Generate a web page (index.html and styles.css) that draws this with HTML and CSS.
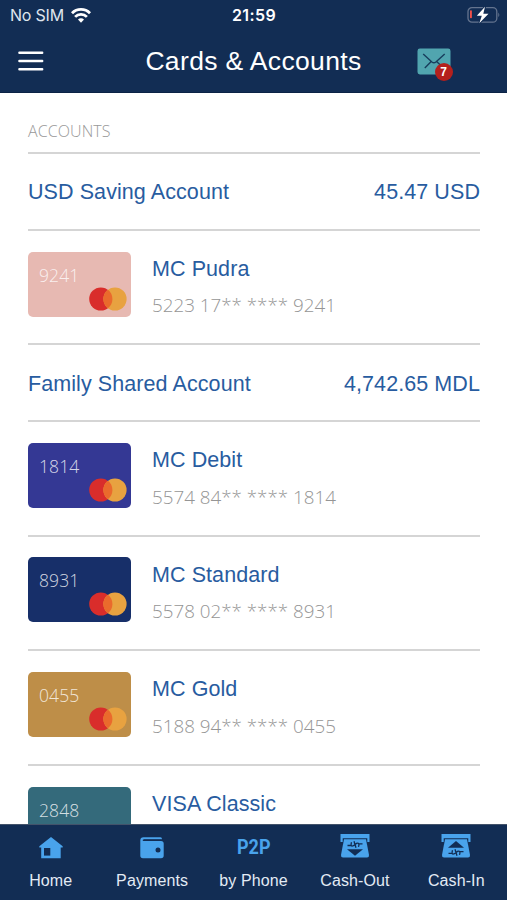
FILE: index.html
```
<!DOCTYPE html>
<html lang="en">
<head>
<meta charset="utf-8">
<meta name="viewport" content="width=device-width, initial-scale=1">
<title>Cards &amp; Accounts</title>
<link rel="stylesheet" href="styles.css">
</head>
<body>
<svg width="0" height="0" class="defs" aria-hidden="true">
  <symbol id="mc" viewBox="0 0 38 24">
    <circle cx="11.8" cy="12" r="11.6" fill="#d92d2b"/>
    <circle cx="26" cy="12" r="11.6" fill="#e8a240"/>
    <path d="M18.9 2.8a11.6 11.6 0 0 1 0 18.4a11.6 11.6 0 0 1 0-18.4z" fill="#ea6a2c"/>
  </symbol>
</svg>
<div class="app">
  <header class="top">
    <div class="status">
      <div class="carrier"><span>No SIM</span>
        <svg width="20" height="15" viewBox="0 0 20 15" fill="none" stroke="#fff" stroke-width="2.8"><path d="M1 5.2a12.6 12.6 0 0 1 18 0"/><path d="M4.1 8.9a8.2 8.2 0 0 1 11.8 0"/><path d="M10 14.8l-3-3.2a4.2 4.2 0 0 1 6 0z" fill="#fff" stroke="none"/></svg>
      </div>
      <div class="time">21:59</div>
      <svg class="battery" width="34" height="18" viewBox="0 0 34 18"><rect x="1" y="1.6" width="28.8" height="14.6" rx="4" fill="none" stroke="#64748f" stroke-width="1.3"/><path d="M31.3 6.5q2 2.4 0 4.8z" fill="#64748f"/><rect x="3" y="4.3" width="1.9" height="8" rx=".8" fill="#f0504a"/><path d="M18 .8L9.8 9.8h5L12.3 17.2L21.5 7.8h-5.2z" fill="#fff" stroke="#122d54" stroke-width="2" paint-order="stroke"/></svg>
    </div>
    <div class="titlebar">
      <svg class="menu" width="26" height="20" viewBox="0 0 26 20" stroke="#fff" stroke-width="2.4" stroke-linecap="round"><path d="M1.4 1.7h22.8M1.4 10h22.8M1.4 18.3h22.8"/></svg>
      <h1>Cards &amp; Accounts</h1>
      <div class="mail">
        <svg width="34" height="27" viewBox="0 0 34 27"><rect x=".5" y=".5" width="33" height="26" rx="2.4" fill="#51a5af"/><path d="M6.2 6l8.700 8q2 1.500 4 0l8.800-8M14.200 13.500L7.800 20M19.600 13.500l7 6.500" fill="none" stroke="#183d5c" stroke-width="1.4"/></svg>
        <span class="badge">7</span>
      </div>
    </div>
  </header>
  <main class="list">
    <h2>ACCOUNTS</h2>
    <div class="account"><span>USD Saving Account</span><span>45.47 USD</span></div>
    <div class="item"><div class="card pudra"><span>9241</span><svg class="logo"><use href="#mc"/></svg></div><div class="info"><div class="name">MC Pudra</div><div class="number">5223 17** **** 9241</div></div></div>
    <div class="account"><span>Family Shared Account</span><span>4,742.65 MDL</span></div>
    <div class="item"><div class="card debit"><span>1814</span><svg class="logo"><use href="#mc"/></svg></div><div class="info"><div class="name">MC Debit</div><div class="number">5574 84** **** 1814</div></div></div>
    <div class="item"><div class="card standard"><span>8931</span><svg class="logo"><use href="#mc"/></svg></div><div class="info"><div class="name">MC Standard</div><div class="number">5578 02** **** 8931</div></div></div>
    <div class="item"><div class="card gold"><span>0455</span><svg class="logo"><use href="#mc"/></svg></div><div class="info"><div class="name">MC Gold</div><div class="number">5188 94** **** 0455</div></div></div>
    <div class="item"><div class="card visa"><span>2848</span></div><div class="info"><div class="name">VISA Classic</div></div></div>
  </main>
  <nav class="tabs">
    <a class="tab"><svg width="24" height="22" viewBox="0 0 24 22"><path d="M12 0L.3 9.2v1.3h1.9V21.2h19.5V10.5h2V9.2z" fill="#49a3ec"/><path d="M5 11h6.3v7.6H5z" fill="#122d54"/></svg><span>Home</span></a>
    <a class="tab"><svg width="24" height="22" viewBox="0 0 24 22"><path d="M3.5.3H20.5q1.5 0 1.5 2H3.6v1.6H21q2.700 0 2.700 2.600v12.100Q23.700 21.200 21 21.200H3Q.3 21.200 .3 18.600V3.500Q.3.300 3.500.3z" fill="#49a3ec"/><path d="M2.800 3.300H21.500" stroke="#122d54" stroke-width="1.3"/><circle cx="18" cy="13" r="2.5" fill="#122d54"/></svg><span>Payments</span></a>
    <a class="tab"><b>P2P</b><span>by Phone</span></a>
    <a class="tab"><svg class="atm" width="30" height="26" viewBox="0 0 30 26"><path d="M.5 1h29v8h-2.200V5.300H2.700V9H.5z" fill="#49a3ec"/><path d="M4 6.300h22L29 22q.2 2.500-2 2.500H3Q.8 24.500 1 22z" fill="#49a3ec"/><path d="M7 16.200h16l-8 6.600z" fill="#122d54"/><path d="M7.500 12.500h4M18.500 10.800h4M11.500 9.200q-1.500 5 2 3.500l3-2.300q3.500-1 2 3.500M14 8.200l2 6.500" fill="none" stroke="#122d54" stroke-width="1.3"/></svg><span>Cash-Out</span></a>
    <a class="tab"><svg class="atm" width="30" height="26" viewBox="0 0 30 26"><path d="M.5 1h29v8h-2.200V5.300H2.700V9H.5z" fill="#49a3ec"/><path d="M4 6.300h22L29 22q.2 2.500-2 2.500H3Q.8 24.500 1 22z" fill="#49a3ec"/><path d="M7 14.700h16l-8-6.600z" fill="#122d54"/><path d="M7.500 20.300h4M18.500 18.700h4M11.500 17.200q-1.500 5 2 3.500l3-2.300q3.500-1 2 3.500M14 16.200l2 6.500" fill="none" stroke="#122d54" stroke-width="1.3"/></svg><span>Cash-In</span></a>
  </nav>
</div>
</body>
</html>
```
FILE: styles.css
```
* { box-sizing: border-box; }
body { margin: 0; font-family: "Liberation Sans", Arial, sans-serif; background: #fff; }
.defs { display: block; height: 0; }
.app { height: 900px; display: flex; flex-direction: column; overflow: hidden; }
.top { flex: none; height: 93px; background: #122d54; color: #fff; border-bottom: 1px solid #0b2345; }
.status { height: 30px; display: grid; grid-template-columns: 1fr auto 1fr; align-items: center; padding: 0 6px 0 10px; font-family: Inter, sans-serif; font-size: 16px; }
.carrier { display: flex; align-items: center; gap: 7px; color: #dfe5ee; letter-spacing: -0.2px; }
.time { font-weight: 600; letter-spacing: 0.4px; margin-right: 3px; }
.battery { justify-self: end; margin-top: -1px; }
.titlebar { height: 62px; display: grid; grid-template-columns: 1fr auto 1fr; align-items: center; padding: 0 18px; }
h1 { margin: 0; font-size: 26.5px; font-weight: 400; letter-spacing: 0.35px; line-height: 30px; }
.mail { position: relative; width: 34px; height: 27px; margin: 0 0 0 55px; }
.mail svg { display: block; }
.badge { position: absolute; left: 18px; top: 15px; width: 18px; height: 18px; border-radius: 50%; background: #b4201d; font: 700 12px/18px "Liberation Sans", Arial, sans-serif; text-align: center; }
.list { flex: 1; min-height: 0; overflow: hidden; padding: 0 27px 0 28px; }
h2 { margin: 0; height: 59.2px; padding-top: 26px; font: 300 16px/24px "Open Sans", sans-serif; letter-spacing: 0.1px; color: #999; }
.account, .item { border-top: 2px solid #d5d5d5; display: flex; color: #285ca0; font-size: 21.5px; letter-spacing: 0.08px; }
.account { height: 76.6px; justify-content: space-between; line-height: 24px; padding-top: 26.2px; }
.item { height: 114.65px; padding-top: 20.8px; gap: 21.5px; }
.card { flex: none; width: 102.5px; height: 65px; border-radius: 5px; padding: 11px 3.5px 6px 11px; display: flex; flex-direction: column; justify-content: space-between; color: rgba(255,255,255,.8); font: 300 17.5px/25px "Open Sans", sans-serif; }
.logo { width: 38px; height: 24px; align-self: flex-end; flex: none; margin-top: -1px; }
.pudra { background: #e7b9b2; }
.debit { background: #343894; }
.standard { background: #172f69; }
.gold { background: #be8e48; }
.visa { background: #346a7b; }
.name { line-height: 24px; padding-top: 5.3px; }
.number { font: 300 18.8px/26px "Open Sans", sans-serif; color: #959595; margin-top: 11.5px; letter-spacing: 0; }
.tabs { flex: none; height: 76px; background: #122d54; border-top: 1px solid #43536a; display: grid; grid-template-columns: repeat(5, 1fr); color: #e3ebf5; }
.tab { display: grid; grid-template-rows: 46px 20px; justify-items: center; align-items: center; align-content: start; font-size: 16px; line-height: 20px; letter-spacing: 0.1px; white-space: nowrap; }
.tab b { font: 700 20px/24px Roboto, sans-serif; color: #49a3ec; transform: scaleX(.9); margin-top: -3px; }
.atm { margin-top: -4px; }
```
